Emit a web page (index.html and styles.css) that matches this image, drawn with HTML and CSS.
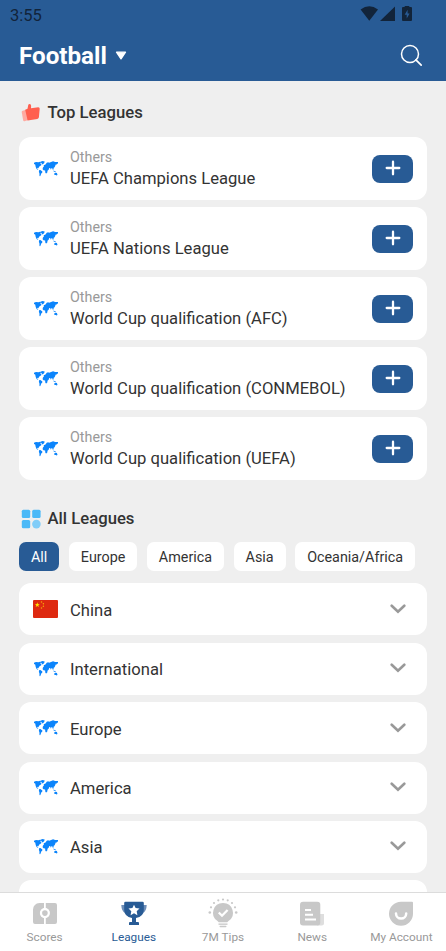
FILE: index.html
```html
<!DOCTYPE html>
<html lang="en">
<head>
<meta charset="utf-8">
<title>Football leagues</title>
<link rel="stylesheet" href="styles.css">
</head>
<body>
<svg width="0" height="0" class="defs">
  <symbol id="map" viewBox="0 0 24 16">
    <path fill="#0b84fb" d="M0 1.700 2 1l2.500.2L6 .8l1 .8-.8 1 1 .3.200 1L6.200 5 5 5.800l-.4 1.300-1 .4-.6-1 .2 1.500 1.100.6-.4.5L2.600 8 1.700 6 1.200 3.500 0 3zM6.400.7 8.500.1l2.200.3-.6 1.800L8.400 3.400 7.500 2.200zM5 9.300l1.400-.2 2 1.300-.2 1.400-1 .8-.5 1.700-.6.9-.6-.3-.1-2.700L4.900 11zM11.500 3.600l1.200-1.800 1.400-.6 1 .5 2-.6 2-.8 2 .7 2.900.1v1.300l-1.400.5-.2 1-.8-.5-.3 1.300-.7 1.600-.9.400-.2 1.700-.7.4-.7-1.700-.7.1-.5 1.500-.8-1.600-.8-.2-.5 1.500-1.300 1.300-.2 1.700-1.100 1.100-.8-.6-.3-2.500-1.600-.1-.9-1.100.3-1.600 1-1-.2-1.400zM19.200 9.600l1.400.3 1.400.9-.3.400-2-.6zM20.300 12.300l1.300-.6.6.4.6-.3.7 2-.7.8-1.100-.6-1.300.1z"/>
  </symbol>
  <symbol id="chevron" viewBox="0 0 16 10">
    <path d="M1.700 1.700 8 7.700l6.300-6" fill="none" stroke="#999" stroke-width="2.600" stroke-linecap="round"/>
  </symbol>
  <symbol id="plus" viewBox="0 0 16 16">
    <path d="M8 1.700v12.600M1.700 8h12.600" stroke="#fff" stroke-width="2.300" stroke-linecap="round"/>
  </symbol>
</svg>

<div class="app">
  <header class="header">
    <div class="status">
      <span class="time">3:55</span>
      <svg width="54" height="16" viewBox="0 0 54 16" fill="#12243a">
        <path d="M.6 3.400Q9.300-2.800 18 3.400L9.300 14.800z"/>
        <path d="M35 .5V15H20z"/>
        <path fill-rule="evenodd" d="M44.500.9q0-.9.900-.9h3.200q.9 0 .9.900h1.500q1 0 1 1v12.200q0 1-1 1h-8q-1 0-1-1V1.900q0-1 1-1zM47.600 3.700 44.700 8.800h2v3.800l2.900-5.100h-2z"/>
      </svg>
    </div>
    <div class="title-row">
      <h1>Football</h1>
      <svg class="caret" width="12" height="10" viewBox="0 0 12 10"><path d="M1.500 1.200h9L6 7.900z" fill="#fff" stroke="#fff" stroke-width="1.300" stroke-linejoin="round"/></svg>
      <svg class="search" width="23" height="23" viewBox="0 0 23 23" fill="none" stroke="#fff"><circle cx="10" cy="10" r="8.500" stroke-width="1.500"/><path d="m15.900 15.900 5.300 5.300" stroke-width="1.700" stroke-linecap="round"/></svg>
    </div>
  </header>

  <main class="content">
    <h2 class="section-title top">
      <svg width="20" height="19" viewBox="0 0 20 19"><path d="M1 8l4-1.300L7.300 17l-3.800 1.300q-1 .2-1.300-.8L.7 9z" fill="#ffaaa1"/><path d="M4.200 6.700 6.500 5.700 7.300 1.800Q8.100.4 9.500 1.300q1 .8.500 3.900l7.300-1q1.500 0 1.400 1.500l-.8 8.500q-.2 1.400-1.600 1.700l-9.700 1.500z" fill="#ff5f4f"/></svg>
      Top Leagues
    </h2>
    <div class="league-list">
      <article class="league"><svg class="map"><use href="#map"/></svg><div class="names"><span class="region">Others</span><span class="name">UEFA Champions League</span></div><button class="add" aria-label="Add"><svg width="16" height="16"><use href="#plus"/></svg></button></article>
      <article class="league"><svg class="map"><use href="#map"/></svg><div class="names"><span class="region">Others</span><span class="name">UEFA Nations League</span></div><button class="add" aria-label="Add"><svg width="16" height="16"><use href="#plus"/></svg></button></article>
      <article class="league"><svg class="map"><use href="#map"/></svg><div class="names"><span class="region">Others</span><span class="name">World Cup qualification (AFC)</span></div><button class="add" aria-label="Add"><svg width="16" height="16"><use href="#plus"/></svg></button></article>
      <article class="league"><svg class="map"><use href="#map"/></svg><div class="names"><span class="region">Others</span><span class="name">World Cup qualification (CONMEBOL)</span></div><button class="add" aria-label="Add"><svg width="16" height="16"><use href="#plus"/></svg></button></article>
      <article class="league"><svg class="map"><use href="#map"/></svg><div class="names"><span class="region">Others</span><span class="name">World Cup qualification (UEFA)</span></div><button class="add" aria-label="Add"><svg width="16" height="16"><use href="#plus"/></svg></button></article>
    </div>

    <h2 class="section-title all">
      <svg width="20" height="20" viewBox="0 0 20 20" fill="#4bb9f7"><rect x=".8" y=".7" width="8.400" height="8.400" rx="1.500"/><rect x="11.200" y=".7" width="8.400" height="8.400" rx="1.500"/><rect x=".8" y="10.900" width="8.400" height="8.400" rx="1.500"/><circle cx="15.400" cy="15.100" r="4.300" fill="#81cdf8"/></svg>
      All Leagues
    </h2>
    <nav class="chips">
      <span class="chip active">All</span><span class="chip">Europe</span><span class="chip">America</span><span class="chip">Asia</span><span class="chip">Oceania/Africa</span>
    </nav>
    <div class="regions">
      <div class="row"><svg class="flag" viewBox="0 0 25 18"><rect width="25" height="18" rx="1" fill="#de2910"/><path fill="#ffde00" d="m4.300 2.200.6 1.800h1.900L5.300 5.100l.6 1.900-1.600-1.100L2.700 7l.6-1.900L1.800 4h1.900z"/><g fill="#f5a70b"><circle cx="8.500" cy="1.900" r=".75"/><circle cx="10.400" cy="3.800" r=".75"/><circle cx="10.400" cy="6.300" r=".75"/><circle cx="8.500" cy="8.100" r=".75"/></g></svg><span>China</span><svg class="chev"><use href="#chevron"/></svg></div>
      <div class="row"><svg class="map"><use href="#map"/></svg><span>International</span><svg class="chev"><use href="#chevron"/></svg></div>
      <div class="row"><svg class="map"><use href="#map"/></svg><span>Europe</span><svg class="chev"><use href="#chevron"/></svg></div>
      <div class="row"><svg class="map"><use href="#map"/></svg><span>America</span><svg class="chev"><use href="#chevron"/></svg></div>
      <div class="row"><svg class="map"><use href="#map"/></svg><span>Asia</span><svg class="chev"><use href="#chevron"/></svg></div>
      <div class="row"></div>
    </div>
  </main>

  <nav class="tabs">
    <div class="tab">
      <svg width="30" height="30" viewBox="0 0 30 30"><path fill="#c8c8c8" d="M9.500 5H14v5.300a5 5 0 0 0 0 9.600V26H5q-2 0-2-2V11.500Q3.500 5.500 9.500 5zM15.800 5H25q2 0 2 2v17q0 2-2 2h-9.200v-6.100a5 5 0 0 0 0-9.600z"/><circle cx="14.900" cy="15.100" r="5" fill="#fff"/><circle cx="14.900" cy="15.100" r="3.600" fill="none" stroke="#c8c8c8" stroke-width="0"/><circle cx="14.900" cy="15.100" r="2.800" fill="#c8c8c8"/></svg>
      <span>Scores</span>
    </div>
    <div class="tab active">
      <svg width="30" height="30" viewBox="0 0 30 30"><path fill="#6d8eb8" d="M2.300 7h4v8Q2.500 13.500 2.300 7zM27.700 7h-4v8q3.800-1.500 4-8z"/><path fill="#285b95" d="M6.500 3.700h17q1.300 0 1.300 1.300v7q0 6.500-7.800 8v4h2q1 0 1 1V27H10v-2q0-1 1-1h2v-4q-7.800-1.500-7.800-8V5q0-1.300 1.300-1.300z"/><path fill="#fff" d="m15 6.700 1.600 3.400 3.900.5-2.800 2.700.7 3.900-3.400-1.900-3.400 1.900.7-3.900-2.800-2.700 3.900-.5z"/></svg>
      <span>Leagues</span>
    </div>
    <div class="tab">
      <svg width="30" height="30" viewBox="0 0 30 30" fill="#c8c8c8"><path d="M15 5a9.800 9.800 0 0 1 5.500 18q-.9.700-1.200 1.300h-8.600q-.3-.6-1.200-1.300A9.800 9.800 0 0 1 15 5z"/><rect x="10.500" y="25.500" width="9" height="1.300"/><rect x="11.500" y="27.700" width="7" height="1.600" rx=".8"/><path d="m10.800 14.500 3.200 3.200 5.600-5.700" fill="none" stroke="#fff" stroke-width="2.300"/><circle cx="3" cy="9.300" r="1.100"/><circle cx="6" cy="5" r="1.100"/><circle cx="10.300" cy="2.300" r="1.100"/><circle cx="15" cy="1.500" r="1.100"/><circle cx="19.700" cy="2.300" r="1.100"/><circle cx="24" cy="5" r="1.100"/><circle cx="27" cy="9.300" r="1.100"/><circle cx="1.800" cy="14.500" r="1.300"/><circle cx="28.200" cy="14.500" r="1.300"/></svg>
      <span>7M Tips</span>
    </div>
    <div class="tab">
      <svg width="30" height="30" viewBox="0 0 30 30"><path fill="#dedede" d="M22 16h5v9q0 2.500-2.500 2.500H20z"/><rect x="3" y="3.700" width="20.300" height="23.800" rx="3" fill="#c8c8c8"/><path d="M8 12h6M8 16.800h8M8 21.500h11" stroke="#fff" stroke-width="2"/></svg>
      <span>News</span>
    </div>
    <div class="tab">
      <svg width="30" height="30" viewBox="0 0 30 30"><path fill="#c8c8c8" d="M15 3.700h11q1 0 1 1v11a12 12 0 1 1-12-12z"/><path d="M10 15.500a5.100 5.100 0 0 0 10.200 0" fill="none" stroke="#fff" stroke-width="2.500" stroke-linecap="round"/></svg>
      <span>My Account</span>
    </div>
  </nav>
</div>
</body>
</html>
```
FILE: styles.css
```css
* { box-sizing: border-box; }
body { margin: 0; background: #efefef; color: #333; font-family: Roboto, "Liberation Sans", sans-serif; }
h1, h2 { margin: 0; }
svg { display: block; flex: none; }
.defs { position: absolute; }
.app { height: 951px; display: flex; flex-direction: column; overflow: hidden; }

.header { height: 81px; flex: none; background: #285b95; padding: 0 22px 0 10px; }
.status { height: 30px; display: flex; justify-content: space-between; align-items: center; padding-right: 10px; margin-right: -6px; }
.status svg { margin-right: 6px; margin-top: -2px; }
.time { font-size: 16.500px; font-weight: 400; color: #12243a; line-height: 30px; padding-top: 1px; }
.title-row { height: 51px; display: flex; align-items: center; padding-left: 9px; }
h1 { color: #fff; font-size: 24.200px; font-weight: 700; line-height: 51px; padding-top: 2px; }
.caret { margin-left: 8px; }
.search { margin-left: auto; margin-right: 1px; }

.content { flex: 1; min-height: 0; overflow: hidden; padding: 0 19px; }
.section-title { display: flex; align-items: center; gap: 6.500px; padding-left: 2px; font-size: 16.700px; font-weight: 500; }
.section-title.top { height: 56px; padding-top: 6px; }
.section-title.all { height: 62px; padding-top: 15px; }
.section-title svg { margin-left: 0; }
.league-list { display: flex; flex-direction: column; gap: 7.100px; }
.league { height: 63px; display: flex; align-items: center; background: #fff; border-radius: 12px; padding: 0 14px 0 15px; }
.map { width: 24px; height: 16px; margin-right: 12px; }
.names { flex: 1; display: flex; flex-direction: column; white-space: nowrap; padding-top: 2px; }
.region { font-size: 14.300px; line-height: 19px; color: #999; }
.name { font-size: 16.620px; line-height: 24px; }
.add { width: 41px; height: 28px; padding: 0; border: 0; border-radius: 8px; background: #285b95; display: grid; place-items: center; }
.add svg { margin-top: -1px; }

.chips { display: flex; gap: 9.500px; height: 29px; }
.chip { background: #fff; border-radius: 7px; padding: 1px 12px 0; font-size: 14.350px; line-height: 30px; white-space: nowrap; }
.chip.active { background: #285b95; color: #fff; }
.regions { display: flex; flex-direction: column; gap: 7.400px; margin-top: 12px; }
.row { height: 52px; flex: none; display: flex; align-items: center; background: #fff; border-radius: 12px; padding: 0 21px 0 15px; font-size: 16.620px; }
.row span { flex: 1; line-height: 52px; padding-top: 3px; }
.flag { width: 25px; height: 18px; margin: 0 12px 0 -1px; }
.chev { width: 16px; height: 10px; margin-top: -1px; }

.tabs { height: 59px; flex: none; display: grid; grid-template-columns: repeat(5, 1fr); background: #fff; border-top: 1px solid #dcdcdc; }
.tab { display: flex; flex-direction: column; align-items: center; padding-top: 5px; font-size: 11.800px; color: #999; }
.tab span { line-height: 18px; white-space: nowrap; }
.tab.active { color: #285b95; }
```
